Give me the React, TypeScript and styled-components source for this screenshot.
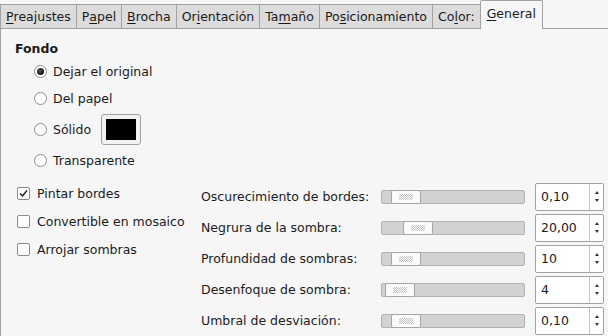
import React from "react";
import styled, { createGlobalStyle } from "styled-components";

const Global = createGlobalStyle`
  html, body { margin: 0; padding: 0; background: #f6f6f6; }
  body { font-family: "DejaVu Sans", "Liberation Sans", sans-serif; font-size: 12.5px; color: #1a1a1a; }
  * { box-sizing: border-box; }
`;

const Window = styled.div`
  width: 608px;
  height: 336px;
  overflow: hidden;
  background: #f6f6f6;
  display: flex;
  flex-direction: column;
`;

const TabBar = styled.div`
  display: flex;
  align-items: flex-end;
  height: 29px;
  flex: none;
  position: relative;
  z-index: 1;
`;

const Tab = styled.div<{ $active?: boolean }>`
  height: ${(p) => (p.$active ? "29px" : "25px")};
  padding: 0 ${(p) => (p.$active ? "6px" : "5px")};
  display: flex;
  align-items: center;
  padding-bottom: ${(p) => (p.$active ? "3px" : "1px")};
  background: ${(p) => (p.$active ? "#f6f6f6" : "#dcdcdc")};
  border: 1px solid #a2a2a2;
  border-bottom: ${(p) => (p.$active ? "none" : "1px solid #a2a2a2")};
  border-right: ${(p) => (p.$active ? "1px solid #a2a2a2" : "none")};
  border-radius: ${(p) => (p.$active ? "2px 2px 0 0" : "0")};
  white-space: nowrap;
  u { text-decoration-thickness: 1px; text-underline-offset: 2px; }
`;

const Panel = styled.div`
  flex: 1;
  margin-top: -1px;
  border-top: 1px solid #a2a2a2;
  border-left: 1px solid #a2a2a2;
  padding: 12px 0 0 14px;
  display: flex;
  flex-direction: column;
`;

const SectionTitle = styled.div`
  font-weight: bold;
  height: 16px;
  line-height: 16px;
`;

const RadioList = styled.div`
  display: flex;
  flex-direction: column;
  padding-left: 19px;
  padding-top: 1px;
`;

const RadioRow = styled.div<{ $tall?: boolean }>`
  display: flex;
  align-items: center;
  gap: 6px;
  height: ${(p) => (p.$tall ? "35px" : "27px")};
`;

const RadioCircle = styled.span<{ $checked?: boolean }>`
  width: 13px;
  height: 13px;
  border-radius: 50%;
  border: 1px solid #8c8c8c;
  background: #fff;
  display: inline-flex;
  align-items: center;
  justify-content: center;
  flex: none;
  &::after {
    content: "";
    display: ${(p) => (p.$checked ? "block" : "none")};
    width: 7px;
    height: 7px;
    border-radius: 50%;
    background: radial-gradient(circle at 40% 40%, #555 0%, #111 70%);
  }
`;

const ColorButton = styled.span`
  margin-left: 4px;
  width: 40px;
  height: 31px;
  border: 1px solid #a2a2a2;
  border-radius: 3px;
  background: #f2f2f2;
  padding: 4px;
  display: flex;
  &::after {
    content: "";
    flex: 1;
    background: #000;
  }
`;

const Lower = styled.div`
  display: flex;
  margin-top: 4px;
`;

const CheckColumn = styled.div`
  width: 186px;
  padding: 1px 0 0 2px;
  display: flex;
  flex-direction: column;
`;

const CheckRow = styled.div`
  height: 28px;
  display: flex;
  align-items: center;
  gap: 7px;
`;

const CheckBox = styled.span`
  width: 13px;
  height: 13px;
  border: 1px solid #8c8c8c;
  border-radius: 2px;
  background: #fff;
  flex: none;
  display: inline-flex;
  align-items: center;
  justify-content: center;
`;

const Grid = styled.div`
  display: grid;
  grid-template-columns: 180px 154px 69px;
  grid-auto-rows: 31px;
  align-items: center;
  margin-top: 3px;
`;

const Label = styled.div`
  white-space: nowrap;
`;

const Trough = styled.div`
  position: relative;
  height: 14px;
  width: 144px;
  border: 1px solid #b2b2b2;
  border-radius: 2px;
  background: #d2d2d2;
`;

const Thumb = styled.div`
  position: absolute;
  top: -1px;
  width: 30px;
  height: 14px;
  border: 1px solid #a6a6a6;
  border-radius: 2px;
  background: #fafafa;
  display: flex;
  align-items: center;
  justify-content: center;
  &::after {
    content: "";
    width: 14px;
    height: 6px;
    background-image: repeating-conic-gradient(#c2c2c2 0 25%, transparent 0 50%);
    background-size: 2px 2px;
  }
`;

const Spin = styled.div`
  width: 69px;
  height: 28px;
  border: 1px solid #a2a2a2;
  border-radius: 2px;
  background: #fff;
  display: flex;
`;

const SpinValue = styled.div`
  flex: 1;
  display: flex;
  align-items: center;
  padding-left: 5px;
`;

const SpinButtons = styled.div`
  width: 14px;
  border-left: 1px solid #c4c4c4;
  display: flex;
  flex-direction: column;
  align-items: center;
  justify-content: center;
  gap: 5px;
`;

const Arrow = styled.span<{ $down?: boolean }>`
  width: 0;
  height: 0;
  border-left: 2.5px solid transparent;
  border-right: 2.5px solid transparent;
  ${(p) => (p.$down ? "border-top: 3px solid #333;" : "border-bottom: 3px solid #333;")}
`;

const tabs: { pre: string; key: string; post: string }[] = [
  { pre: "", key: "P", post: "reajustes" },
  { pre: "P", key: "a", post: "pel" },
  { pre: "", key: "B", post: "rocha" },
  { pre: "Or", key: "i", post: "entación" },
  { pre: "Ta", key: "m", post: "año" },
  { pre: "Po", key: "s", post: "icionamiento" },
  { pre: "Co", key: "l", post: "or:" },
];

const sliders = [
  { label: "Oscurecimiento de bordes:", pos: 9, value: "0,10" },
  { label: "Negrura de la sombra:", pos: 21, value: "20,00" },
  { label: "Profundidad de sombras:", pos: 9, value: "10" },
  { label: "Desenfoque de sombra:", pos: 3, value: "4" },
  { label: "Umbral de desviación:", pos: 9, value: "0,10" },
];

export default function App() {
  return (
    <>
      <Global />
      <Window>
        <TabBar>
          {tabs.map((t, i) => (
            <Tab key={i}>
              {t.pre}
              <u>{t.key}</u>
              {t.post}
            </Tab>
          ))}
          <Tab $active>
            <u>G</u>eneral
          </Tab>
        </TabBar>
        <Panel>
          <SectionTitle>Fondo</SectionTitle>
          <RadioList>
            <RadioRow>
              <RadioCircle $checked />
              Dejar el original
            </RadioRow>
            <RadioRow>
              <RadioCircle />
              Del papel
            </RadioRow>
            <RadioRow $tall>
              <RadioCircle />
              Sólido
              <ColorButton />
            </RadioRow>
            <RadioRow>
              <RadioCircle />
              Transparente
            </RadioRow>
          </RadioList>
          <Lower>
            <CheckColumn>
              <CheckRow>
                <CheckBox>
                  <svg width="9" height="9" viewBox="0 0 9 9">
                    <path d="M1 4.5 L3.5 7 L8 1.5" fill="none" stroke="#222" strokeWidth="1.5" />
                  </svg>
                </CheckBox>
                Pintar bordes
              </CheckRow>
              <CheckRow>
                <CheckBox />
                Convertible en mosaico
              </CheckRow>
              <CheckRow>
                <CheckBox />
                Arrojar sombras
              </CheckRow>
            </CheckColumn>
            <Grid>
              {sliders.map((s, i) => (
                <React.Fragment key={i}>
                  <Label>{s.label}</Label>
                  <Trough>
                    <Thumb style={{ left: s.pos }} />
                  </Trough>
                  <Spin>
                    <SpinValue>{s.value}</SpinValue>
                    <SpinButtons>
                      <Arrow />
                      <Arrow $down />
                    </SpinButtons>
                  </Spin>
                </React.Fragment>
              ))}
            </Grid>
          </Lower>
        </Panel>
      </Window>
    </>
  );
}
